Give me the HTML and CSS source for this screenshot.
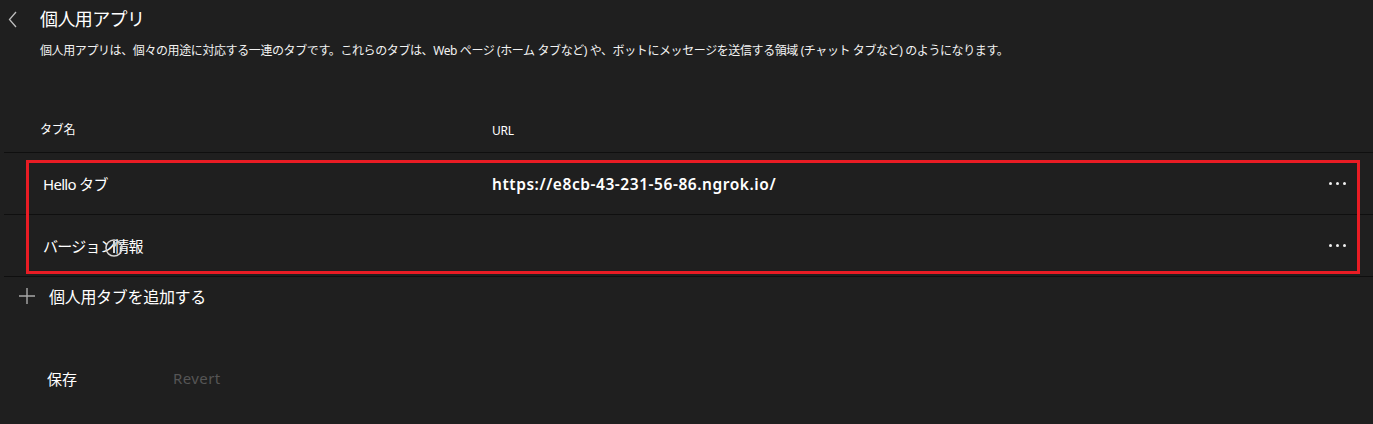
FILE: index.html
```html
<!DOCTYPE html>
<html lang="ja">
<head>
<meta charset="utf-8">
<title>個人用アプリ</title>
<link rel="stylesheet" href="styles.css">
</head>
<body>
<div class="page">
  <div class="top">
    <svg class="back" width="9" height="17" viewBox="0 0 9 17"><path d="M8 1 L1.5 8.5 L8 16" fill="none" stroke="#bdbdbd" stroke-width="1.3"/></svg>
    <h1 class="title">個人用アプリ</h1>
  </div>
  <p class="desc">個人用アプリは、個々の用途に対応する一連のタブです。これらのタブは、Web ページ (ホーム タブなど) や、ボットにメッセージを送信する領域 (チャット タブなど) のようになります。</p>

  <div class="table">
    <div class="row head">
      <div class="cell name">タブ名</div>
      <div class="cell url">URL</div>
    </div>
    <div class="rows">
      <div class="row item">
        <div class="cell name">Hello タブ</div>
        <div class="cell url strong">https://e8cb-43-231-56-86.ngrok.io/</div>
        <div class="more"><i></i><i></i><i></i></div>
      </div>
      <div class="row item">
        <div class="cell name cursor-host">バージョン情報
          <svg class="cursor" width="20" height="20" viewBox="0 0 20 20"><circle cx="10" cy="10" r="8" fill="none" stroke="#d8d8d8" stroke-width="1.5"/><rect x="9" y="3" width="2" height="12" fill="#d8d8d8"/></svg>
        </div>
        <div class="cell url"></div>
        <div class="more"><i></i><i></i><i></i></div>
      </div>
    </div>
  </div>

  <div class="add">
    <svg class="plus" width="18" height="18" viewBox="0 0 18 18"><path d="M9 1 V17 M1 9 H17" stroke="#a8a8a8" stroke-width="1.4"/></svg>
    <span>個人用タブを追加する</span>
  </div>

  <div class="actions">
    <span class="btn save">保存</span>
    <span class="btn revert">Revert</span>
  </div>
</div>
</body>
</html>
```

FILE: styles.css
```css
html, body {
  margin: 0;
  padding: 0;
  background: #1f1f1f;
}
body {
  width: 1373px;
  height: 424px;
  overflow: hidden;
  color: #ffffff;
  font-family: "Noto Sans", "Noto Sans CJK JP", sans-serif;
}
.page {
  display: flex;
  flex-direction: column;
}
.top {
  height: 38px;
  display: flex;
  align-items: center;
  padding-left: 8px;
}
.back {
  display: block;
}
.title {
  margin: 0 0 0 23px;
  font-size: 18px;
  font-weight: 400;
  letter-spacing: -0.6px;
  line-height: 24px;
}
.desc {
  margin: 5px 0 0 40px;
  font-size: 12px;
  line-height: 16px;
  letter-spacing: -0.4px;
  color: #f2f2f2;
}
.table {
  margin: 45px 0 0 4px;
}
.row {
  display: grid;
  align-items: center;
  border-bottom: 1px solid #0f0f0f;
}
.row.head {
  height: 48px;
  padding-left: 36px;
  grid-template-columns: 452px 1fr;
}
.row.head .cell {
  font-size: 12px;
  letter-spacing: -0.3px;
  padding-top: 2px;
}
.row.head .url {
  padding-top: 5px;
}
.rows {
  position: relative;
}
.rows::after {
  content: "";
  position: absolute;
  left: 22px;
  top: 7px;
  right: 13px;
  bottom: 3px;
  border: 3px solid #e81c24;
  pointer-events: none;
}
.row.item {
  height: 61px;
  padding-left: 39px;
  grid-template-columns: 449px 1fr 46px;
  font-size: 15px;
}
.row.item .name {
  letter-spacing: -0.7px;
}
.strong {
  font-weight: 600;
  letter-spacing: 0.55px;
  font-size: 15.5px;
}
.more {
  display: flex;
  gap: 4px;
  padding-left: 2px;
}
.more i {
  display: block;
  width: 3px;
  height: 3px;
  background: #f0f0f0;
  border-radius: 50%;
}
.cursor-host {
  position: relative;
}
.cursor {
  position: absolute;
  left: 61px;
  top: 3px;
}
.add {
  height: 38px;
  display: flex;
  align-items: center;
  padding-left: 18px;
  font-size: 16px;
  letter-spacing: -0.3px;
}
.plus {
  display: block;
  margin-right: 13px;
}
.actions {
  margin-top: 47px;
  height: 32px;
  display: flex;
  align-items: center;
  padding-left: 47px;
  font-size: 15px;
}
.btn.save {
  width: 126px;
}
.btn.revert {
  color: #555555;
  letter-spacing: 0.4px;
}
```
